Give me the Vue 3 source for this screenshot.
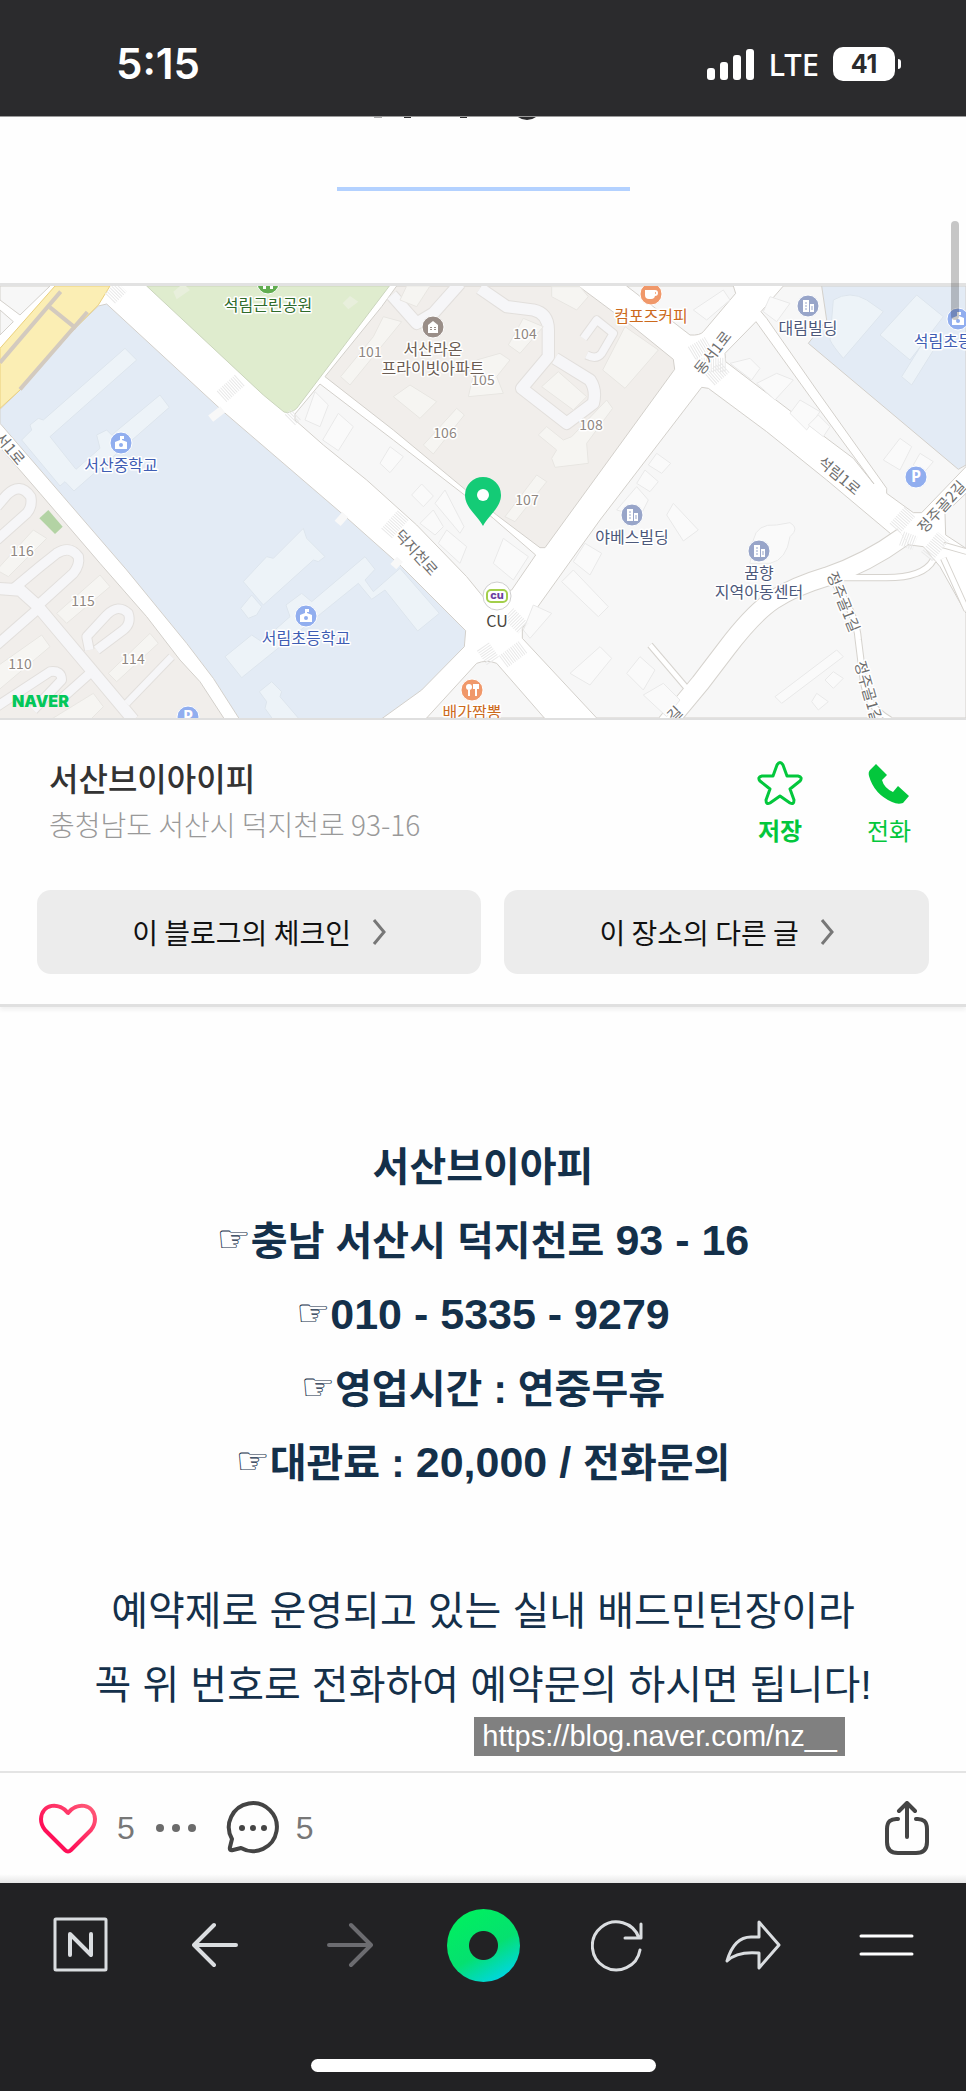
<template>
  <div class="screen">
    <header class="status">
      <time class="clock">5:15</time>
      <div class="status-right">
        <div class="signal">
          <span v-for="n in 4" :key="n" :class="'bar bar-' + n"></span>
        </div>
        <span class="network">LTE</span>
        <div class="battery">41</div>
      </div>
    </header>

    <main class="post">
      <section class="intro">
        <svg class="heading-cut" viewBox="0 0 180 5" aria-hidden="true">
          <rect x="4" y="0" width="8" height="1" fill="#aaa" />
          <rect x="34" y="0" width="7" height="1" />
          <rect x="90" y="0" width="7" height="1" />
          <path d="M148 0H166Q162 3 157 3Q152 3 148 0Z" />
        </svg>
        <hr class="divider" />
      </section>

      <section class="place">
        <svg class="map" viewBox="0 0 966 432" preserveAspectRatio="xMidYMid slice">
          <g transform="scale(0.33333) translate(0 -18)">
            <rect y="18" width="2898" height="1300" fill="#fff" />

            <g class="block">
              <path v-for="d in blocks" :key="d" :d="d" />
            </g>
            <g class="block estate">
              <path v-for="d in estates" :key="d" :d="d" />
            </g>
            <g class="block school">
              <path v-for="d in schools" :key="d" :d="d" />
            </g>
            <path class="park" d="M440 18H1168L890 385Q872 402 852 396L790 345Z" />
            <path class="lawn" d="M520 35L550 10L570 30L530 58ZM1028 70L1050 48L1075 65L1045 88Z" />
            <path class="plaza" d="M165 18H330L295 75L220 150L60 330L0 385V205Z" />
            <path class="rail" d="M182 35L0 248M150 82L228 145M262 96L60 328" />

            <g class="lane-edge">
              <path v-for="lane in lanes" :key="lane.d" :d="lane.d" :stroke-width="lane.w + 6" />
            </g>
            <g class="lane">
              <path v-for="lane in lanes" :key="lane.d" :d="lane.d" :stroke-width="lane.w" />
            </g>
            <g class="road-edge">
              <path v-for="road in roads" :key="road.d" :d="road.d" :stroke-width="road.w + 6" />
            </g>
            <g class="road">
              <path v-for="road in roads" :key="road.d" :d="road.d" :stroke-width="road.w" />
              <path class="gate" d="M632 416L668 388M1013 730L1036 704M1180 860L1200 838" />
            </g>

            <path class="garden" d="M145 690L188 740L165 762L118 715Z" />
            <g class="house">
              <path v-for="d in houses" :key="d" :d="d" />
            </g>
            <g class="house flat">
              <path v-for="d in flats" :key="d" :d="d" />
            </g>
            <g class="house classroom">
              <path v-for="d in classrooms" :key="d" :d="d" />
            </g>
            <path class="crosswalk" d="M665 350L720 300M870 420L890 400M1160 760L1210 705M2075 220L2125 190M2090 255L2180 255M2130 300L2175 260M2685 745L2730 695M2705 775L2745 790M2780 830L2830 770M1525 1000L1570 1045M1510 1145L1570 1100M1449 1100L1480 1145M330 55L365 20" />
          </g>

          <g v-for="pin in pins" :key="pin.x + '-' + pin.y" :transform="'translate(' + pin.x + ' ' + pin.y + ')'">
            <circle r="11" :class="'pin ' + pin.type" />
            <g v-if="pin.type === 'edu'" class="glyph">
              <path d="M-6 -1L-1 -3V-7H3V-4H1V-3L6 -1V6H-6Z" />
              <circle cy="2" r="2" class="edu" />
            </g>
            <g v-else-if="pin.type === 'office'" class="glyph">
              <path d="M-5 -6H1V6H-5ZM2 -2H6V6H2Z" />
              <path class="office-lines" d="M-3 -3H-1M-3 0H-1M-3 3H-1M4 0V4" />
            </g>
            <g v-else-if="pin.type === 'home'" class="glyph">
              <path d="M-5 -2L0 -6L5 -2V6H-5Z" />
              <path class="home-lines" d="M-2 0V4M2 0V4" />
            </g>
            <text v-else-if="pin.type === 'parking'" class="parking-text" y="5">P</text>
            <g v-else-if="pin.type === 'cafe'" class="glyph">
              <path d="M-6 -4H4V1Q4 5 0 5H-2Q-6 5 -6 1Z" />
              <circle class="handle" cx="4" cy="-1" r="2" />
            </g>
            <g v-else-if="pin.type === 'food'" class="glyph">
              <circle cx="-3" cy="-3" r="3" />
              <path class="fork" d="M-3 0V6M4 -6V6M2 -6V-2H6V-6" />
            </g>
            <path v-else class="tree" d="M-5 0V6H-2V2H2V6H5V0Z" />
          </g>

          <g class="store" transform="translate(497 310)">
            <circle r="14" />
            <rect x="-10" y="-6" width="20" height="12" rx="4" />
            <text y="3">cu</text>
          </g>

          <text
            v-for="label in labels"
            :key="label.text + label.x + label.y"
            :class="'label ' + label.type"
            :x="label.x"
            :y="label.y"
          >{{ label.text }}</text>
          <text
            v-for="street in streets"
            :key="street.text + street.x"
            class="label street"
            y="5"
            :transform="'translate(' + street.x + ' ' + street.y + ') rotate(' + street.turn + ')'"
          >{{ street.text }}</text>

          <path class="marker" d="M483 240C478 230 465 222 465 209A18 18 0 1 1 501 209C501 222 488 230 483 240Z" />
          <circle cx="483" cy="209" r="6" fill="#fff" />
          <text class="brand" x="12" y="421">NAVER</text>
        </svg>

        <div class="place-info">
          <div>
            <h2 class="place-name">서산브이아이피</h2>
            <p class="place-address">충청남도 서산시 덕지천로 93-16</p>
          </div>
          <div class="place-actions">
            <button type="button" class="action strong">
              <svg viewBox="0 0 46 46" width="46" height="46" fill="none" stroke="currentColor" stroke-width="3" stroke-linejoin="round">
                <path d="M20 5Q23 0 26 5L30 16L41 16Q46 17 43 21L33 29L37 40Q37 45 33 43L23 36L13 43Q9 45 9 40L13 29L3 21Q0 17 5 16L16 16Z" />
              </svg>
              저장
            </button>
            <button type="button" class="action">
              <svg viewBox="0 0 46 46" width="46" height="46" fill="currentColor">
                <path d="M10 4L21 15L16 20Q18 28 27 32L32 26L43 36L37 43Q32 45 26 42Q8 34 3 16Q2 12 4 10Z" />
              </svg>
              전화
            </button>
          </div>
        </div>

        <div class="place-links">
          <a v-for="link in links" :key="link" href="#" class="place-link">
            {{ link }}
            <svg viewBox="0 0 14 26" width="14" height="26" fill="none" stroke="#777" stroke-width="3">
              <path d="M2 1L12 13L2 25" />
            </svg>
          </a>
        </div>
      </section>

      <section class="body">
        <p class="bold">서산브이아피</p>
        <p class="bold"><span class="hand">☞</span>충남 서산시 덕지천로 <span class="num">93 - 16</span></p>
        <p class="bold"><span class="hand">☞</span><span class="num">010 - 5335 - 9279</span></p>
        <p class="bold"><span class="hand">☞</span>영업시간 : 연중무휴</p>
        <p class="bold"><span class="hand">☞</span>대관료 : <span class="num">20,000 / </span>전화문의</p>
        <p>&nbsp;</p>
        <p>예약제로 운영되고 있는 실내 배드민턴장이라</p>
        <p>꼭 위 번호로 전화하여 예약문의 하시면 됩니다!</p>
        <a class="watermark" href="#">https://blog.naver.com/nz__</a>
      </section>
      <div class="scrollbar"></div>
    </main>

    <div class="reactions">
      <button type="button" class="reaction like" aria-label="공감">
        <svg viewBox="0 0 58 52" width="58" height="52" fill="none">
          <defs>
            <linearGradient id="heart" x1="0" y1="1" x2="1" y2="0">
              <stop offset="0.3" stop-color="#ff1058" />
              <stop offset="1" stop-color="#ff5c78" />
            </linearGradient>
          </defs>
          <path d="M29 11C21 0 3 1 2 17Q2 23 6 28L26 48Q29 51 32 48L52 28Q56 23 56 17C55 1 37 0 29 11Z" stroke="url(#heart)" stroke-width="4" stroke-linejoin="round" />
        </svg>
        <span>5</span>
      </button>
      <button type="button" class="reaction more" aria-label="더보기">
        <svg viewBox="0 0 40 8" width="40" height="8" fill="#6b6b6b">
          <circle cx="4" cy="4" r="4" />
          <circle cx="20" cy="4" r="4" />
          <circle cx="36" cy="4" r="4" />
        </svg>
      </button>
      <button type="button" class="reaction" aria-label="댓글">
        <svg viewBox="0 0 54 54" width="54" height="54">
          <path d="M6 38A24 24 0 1 1 15 47L7 49Q3 50 4 46Z" fill="none" stroke="#444" stroke-width="4" stroke-linejoin="round" />
          <g fill="#444">
            <circle cx="16" cy="27" r="3" />
            <circle cx="27" cy="27" r="3" />
            <circle cx="38" cy="27" r="3" />
          </g>
        </svg>
        <span>5</span>
      </button>
      <button type="button" class="reaction share" aria-label="공유">
        <svg viewBox="0 0 46 54" width="46" height="54" fill="none" stroke="#444" stroke-width="4" stroke-linecap="round" stroke-linejoin="round">
          <path d="M23 36V3M15 10L23 2L31 10M14 18Q3 17 3 28V41Q3 52 14 52H32Q43 52 43 41V28Q43 17 32 18" />
        </svg>
      </button>
    </div>

    <footer class="browser">
      <nav class="toolbar">
        <button type="button" aria-label="네이버 홈">
          <svg viewBox="0 0 56 56" width="56" height="56" fill="none" stroke="#dadde0" stroke-width="4" stroke-linecap="round" stroke-linejoin="round">
            <rect x="2" y="2" width="51" height="51" rx="1" stroke-width="3" />
            <path d="M17 38V17L38 38V17" />
          </svg>
        </button>
        <button type="button" aria-label="뒤로">
          <svg viewBox="0 0 46 46" width="46" height="46" fill="none" stroke="#dadde0" stroke-width="4" stroke-linecap="round" stroke-linejoin="round">
            <path d="M44 23H3M22 3L2 23L22 43" />
          </svg>
        </button>
        <button type="button" aria-label="앞으로" disabled>
          <svg viewBox="0 0 46 46" width="46" height="46" fill="none" stroke="#6c6c70" stroke-width="4" stroke-linecap="round" stroke-linejoin="round">
            <path d="M2 23H43M24 3L44 23L24 43" />
          </svg>
        </button>
        <button type="button" class="green-dot" aria-label="그린닷"></button>
        <button type="button" aria-label="새로고침">
          <svg viewBox="0 0 54 54" width="54" height="54" fill="none" stroke="#dadde0" stroke-width="3" stroke-linecap="round" stroke-linejoin="round">
            <path d="M49 32A24 24 0 1 1 48 20M50 6V20H34" />
          </svg>
        </button>
        <button type="button" aria-label="공유하기">
          <svg viewBox="0 0 56 50" width="56" height="50" fill="none" stroke="#dadde0" stroke-width="3" stroke-linejoin="round">
            <path d="M34 2L54 25L34 48V33Q12 31 2 41Q9 17 26 17H34Z" />
          </svg>
        </button>
        <button type="button" aria-label="메뉴">
          <svg viewBox="0 0 56 22" width="56" height="22" stroke="#fff" stroke-width="3" stroke-linecap="round">
            <path d="M2 2H53M2 20H53" />
          </svg>
        </button>
      </nav>
      <div class="home-indicator"></div>
    </footer>
  </div>
</template>

<script setup>
const links = ["이 블로그의 체크인", "이 장소의 다른 글"];

// Khối đất nền xám nhạt
const blocks = [
  "M0 18H150L60 105L0 60Z",
  "M0 90L40 125L0 165Z",
  "M960 312L885 402V420L970 495L1100 600L1250 735L1400 890L1449 950L1535 930L1607 825L1480 715L1400 650L1180 480Z",
  "M1880 18H2200L2207 40L2110 155Q2100 167 2070 165Z",
  "M2350 18L2283 95L2300 115L2450 330L2660 625L2660 640L2740 698H2765L2898 560V18Z",
  "M2268 125L2175 220L2177 245L2400 415L2560 535L2622 612L2430 350Z",
  "M2105 322L2125 325L2300 455L2480 600L2673 762L2690 790L2770 800L2820 860L2898 1000V1314H1790L1567 1075V1045L1800 720Z",
  "M2898 640L2835 700L2837 765L2898 805Z",
  "M1280 1314L1430 1150Q1460 1138 1490 1150L1633 1314Z",
];

const estates = [
  "M-10 490L120 640L300 850L440 1010L540 1140L600 1205L675 1320H-10Z",
  "M1190 18L1145 80L975 290L1180 450L1395 628L1490 705L1620 803H1635L2024 268L2020 238L1899 140L1735 18Z",
];

const schools = [
  "M320 72L295 78L220 150L60 330L0 388V430L190 650L380 870L560 1090L640 1195L720 1320H1140L1265 1230L1393 1100L1397 1052L1205 860L1025 700L670 395Z",
  "M2465 18H2898V555L2875 568L2425 190L2480 120Z",
];

const lanes = [
  { w: 34, d: "M-10 925L60 930L110 975L270 1165L400 1320" },
  { w: 28, d: "M-10 680L20 645Q60 605 92 650Q98 680 80 700L-10 780" },
  { w: 28, d: "M30 935L120 860L170 820Q210 795 235 830Q240 855 220 880L115 975" },
  { w: 26, d: "M268 1110L260 1070L320 1005Q355 970 385 1000Q395 1030 370 1050L290 1110" },
  { w: 28, d: "M110 990L-10 1095" },
  { w: 26, d: "M-10 1280L150 1175Q185 1170 185 1200L100 1290M270 1180L180 1260" },
  { w: 20, d: "M380 1270L515 1130" },
  { w: 34, d: "M1175 45L1250 130L1300 100L1380 10" },
  { w: 34, d: "M1440 25L1520 80L1600 90Q1645 100 1645 150V230L1565 325L1700 430L1780 370Q1790 330 1770 300L1665 235" },
  { w: 22, d: "M1760 225Q1790 240 1805 220L1840 160L1790 120L1750 175" },
];

const roads = [
  { w: 54, d: "M2000 1330L2100 1210L2180 1105Q2260 1000 2320 960Q2380 920 2480 890Q2600 850 2710 770" },
  { w: 16, d: "M2530 893H2650Q2770 895 2800 840" },
  { w: 16, d: "M2490 890Q2570 1000 2575 1080L2590 1200Q2600 1280 2670 1320" },
  { w: 14, d: "M1950 1095L2065 1230" },
  { w: 14, d: "M2830 835L2900 990M2830 795L2900 815" },
];

const houses = [
  "M945 335L985 375L960 440L915 420Z",
  "M1015 400L1060 440L1015 512L968 480Z",
  "M1170 500L1210 530L1170 578L1140 550Z",
  "M1265 612L1300 648L1270 680L1235 645Z",
  "M1335 630L1392 740L1380 760L1305 670Z",
  "M1300 690L1330 740L1305 765L1260 730Z",
  "M1340 750L1400 800L1380 850L1315 790Z",
  "M1510 775L1585 830L1540 900L1480 850Z",
  "M2170 30L2190 60L2120 120L2080 90Z",
  "M2310 50L2370 70L2330 125L2290 95Z",
  "M2190 250L2250 235L2280 265L2255 300Z",
  "M2330 280L2380 300L2325 360L2270 310Z",
  "M2400 360L2460 395L2420 450L2370 400Z",
  "M2455 405L2490 440L2470 470L2425 435Z",
  "M2700 475L2735 500L2700 570L2650 540Z",
  "M2760 520L2800 545L2770 580L2740 555Z",
  "M1970 520L2012 550L1985 580L1945 555Z",
  "M1935 570L1975 605L1950 635L1910 610Z",
  "M2020 670L2095 750L2050 783L2000 705Z",
  "M1910 620L1945 660L1920 710L1850 690Z",
  "M1755 790L1805 820L1770 885L1720 845Z",
  "M1720 870L1825 980L1795 1010L1685 905Z",
  "M1600 975L1655 1000L1590 1075L1570 1050Z",
  "M1800 1100L1835 1135L1770 1215L1710 1180Z",
  "M1920 1130L1965 1170L1930 1230L1880 1180Z",
  "M1990 1210L2040 1260L2000 1310L1930 1245Z",
  "M2260 780Q2270 730 2330 735L2370 728Q2400 745 2370 770Q2360 840 2310 850L2250 850Z",
  "M2510 1110L2530 1130L2345 1270L2325 1250Z",
  "M2500 1175L2530 1195L2500 1225L2475 1200Z",
  "M2450 1240L2485 1265L2455 1290L2435 1265Z",
];

const flats = [
  "M-10 870L100 750L140 775L25 890Z",
  "M170 1000L300 885L330 920L200 1030Z",
  "M325 1180L450 1060L475 1090L350 1205Z",
  "M-10 1160L125 1065L150 1100L-10 1235Z",
  "M150 1320L280 1240L310 1280L270 1320Z",
  "M1150 110L1205 125L1050 315L1022 290L1120 170Z",
  "M1230 315L1310 365L1260 415L1180 350Z",
  "M1370 385L1393 405L1300 522L1270 495Z",
  "M1430 240L1500 220L1530 240L1490 290L1510 340L1405 350Z",
  "M1570 115L1630 140L1560 220L1525 195Z",
  "M1610 585L1640 605L1545 725L1515 710Z",
  "M1675 275L1760 350L1720 390L1625 320Z",
  "M1820 360L1838 385L1760 490L1765 550L1665 562L1655 535L1670 510L1615 465L1640 440L1690 480L1715 470Z",
  "M1875 140L1975 210L1875 325L1808 270Z",
  "M1655 20H1740L1765 50L1730 90L1655 50Z",
  "M1220 18H1290L1250 80L1200 60Z",
];

const classrooms = [
  "M375 205L410 240L150 470L228 568L300 505L290 465L320 450L335 465L480 345L508 382L222 633L195 605L180 618L65 480L95 450L90 435L115 415L130 420Z",
  "M910 745L920 775L975 830L955 845L940 840L790 975L730 905L800 830L820 835Z",
  "M755 945L785 980L770 1005L745 1015L722 985Z",
  "M1095 830L1125 868L1095 900L1120 935L1200 865L1318 1000L1253 1053L1155 930L1115 958L1075 910L725 1193L675 1130L755 1065L785 1085L870 1010L858 975L905 940L935 965Z",
  "M815 1205L845 1235L840 1250L900 1320H820L795 1285L800 1265L778 1235Z",
  "M2500 60Q2550 30 2600 60L2650 95L2530 235Q2500 200 2490 180Z",
  "M2750 45L2830 110L2730 240L2640 165Z",
  "M2780 170L2810 195L2735 315L2705 290Z",
];

const pins = [
  { x: 268, y: -3, type: "green" },
  { x: 121, y: 157, type: "edu" },
  { x: 306, y: 330, type: "edu" },
  { x: 958, y: 33, type: "edu" },
  { x: 433, y: 41, type: "home" },
  { x: 651, y: 8, type: "cafe" },
  { x: 472, y: 404, type: "food" },
  { x: 808, y: 20, type: "office" },
  { x: 632, y: 229, type: "office" },
  { x: 759, y: 265, type: "office" },
  { x: 916, y: 191, type: "parking" },
  { x: 188, y: 431, type: "parking" },
];

const labels = [
  { text: "101", x: 370, y: 71, type: "unit" },
  { text: "104", x: 525, y: 53, type: "unit" },
  { text: "105", x: 483, y: 99, type: "unit" },
  { text: "106", x: 445, y: 152, type: "unit" },
  { text: "107", x: 527, y: 219, type: "unit" },
  { text: "108", x: 591, y: 144, type: "unit" },
  { text: "110", x: 20, y: 383, type: "unit" },
  { text: "114", x: 133, y: 378, type: "unit" },
  { text: "115", x: 83, y: 320, type: "unit" },
  { text: "116", x: 22, y: 270, type: "unit" },
  { text: "석림근린공원", x: 268, y: 25, type: "nature" },
  { text: "서산중학교", x: 121, y: 185, type: "academy" },
  { text: "서림초등학교", x: 306, y: 358, type: "academy" },
  { text: "석림초등학교", x: 958, y: 61, type: "academy" },
  { text: "서산라온", x: 433, y: 69, type: "living" },
  { text: "프라이빗아파트", x: 433, y: 88, type: "living" },
  { text: "컴포즈커피", x: 651, y: 36, type: "eatery" },
  { text: "배가짬뽕", x: 472, y: 432, type: "eatery" },
  { text: "대림빌딩", x: 808, y: 48, type: "building" },
  { text: "야베스빌딩", x: 632, y: 257, type: "building" },
  { text: "꿈향", x: 759, y: 293, type: "building" },
  { text: "지역아동센터", x: 759, y: 312, type: "building" },
  { text: "CU", x: 497, y: 341, type: "shop" },
];

const streets = [
  { text: "서1로", x: 10, y: 163, turn: 50 },
  { text: "덕지천로", x: 416, y: 267, turn: 48 },
  { text: "동서1로", x: 713, y: 67, turn: -52 },
  { text: "석림1로", x: 839, y: 190, turn: 40 },
  { text: "정주골2길", x: 942, y: 221, turn: -48 },
  { text: "정주골1길", x: 843, y: 316, turn: 68 },
  { text: "정주골1길", x: 868, y: 406, turn: 74 },
  { text: "길", x: 675, y: 428, turn: -45 },
];
</script>

<style>
body {
  margin: 0;
}
</style>

<style scoped>
.screen {
  display: flex;
  flex-direction: column;
  min-height: 100vh;
  background: #fefefe;
  color: #14304a;
  font-family: "Noto Sans CJK KR", sans-serif;
}
p,
h2 {
  margin: 0;
}
button {
  padding: 0;
  border: none;
  background: none;
  font-family: inherit;
}
svg {
  display: block;
}

/* status bar */
.status {
  box-sizing: border-box;
  height: 116px;
  padding: 12px 65px 0 116px;
  display: flex;
  align-items: center;
  justify-content: space-between;
  background: #2b2b2d;
  color: #fff;
}
.clock {
  font: 600 42px/48px Inter, sans-serif;
}
.status-right {
  display: flex;
  align-items: center;
}
.signal {
  display: flex;
  align-items: flex-end;
  gap: 5px;
  margin-right: 14px;
}
.bar {
  width: 8px;
  border-radius: 3px;
  background: #fff;
}
.bar-1 {
  height: 12px;
}
.bar-2 {
  height: 18px;
}
.bar-3 {
  height: 25px;
}
.bar-4 {
  height: 31px;
}
.network {
  margin-right: 14px;
  font: 500 31px/36px "Noto Sans", sans-serif;
}
.battery {
  position: relative;
  width: 62px;
  margin-right: 6px;
  border-radius: 10px;
  background: #fff;
  color: #2b2b2d;
  font: 700 25px/34px Inter, sans-serif;
  text-align: center;
}
.battery::after {
  content: "";
  position: absolute;
  right: -6px;
  top: 12px;
  width: 3px;
  height: 10px;
  border-radius: 0 4px 4px 0;
  background: #fff;
}

/* post */
.post {
  position: relative;
  flex: 1;
}
.intro {
  box-sizing: border-box;
  height: 167px;
  border-top: 1px solid #9a9a9a;
}
.heading-cut {
  width: 180px;
  height: 5px;
  margin: 0 auto;
  fill: #2b2b2d;
  padding-right: 46px;
}
.divider {
  width: 293px;
  height: 4px;
  margin: 65px auto 0;
  border: none;
  background: #b3d1ff;
}
.scrollbar {
  position: absolute;
  top: 105px;
  right: 7px;
  width: 8px;
  height: 99px;
  border-radius: 4px;
  background: rgba(0, 0, 0, 0.22);
}

/* map */
.place {
  border-top: 3px solid #e2e2e2;
  border-bottom: 3px solid #e0e0e0;
  box-shadow: 0 3px 4px #f1f1f1;
}
.map {
  width: 100%;
  height: 432px;
  border-bottom: 2px solid #dfdfdf;
}
.block {
  fill: #f7f7f7;
  stroke: #d3d0cb;
  stroke-width: 3;
}
.estate {
  fill: #f1eeeb;
}
.school {
  fill: #e3ebf5;
}
.park {
  fill: #dfecce;
  stroke: #cbd5bd;
  stroke-width: 3;
}
.lawn {
  fill: #e8efdc;
}
.plaza {
  fill: #fbeeb4;
  stroke: #ead07c;
  stroke-width: 3;
}
.rail {
  fill: none;
  stroke: #d3cabf;
  stroke-width: 12;
}
.garden {
  fill: #b3d3a4;
}
.lane,
.lane-edge,
.road,
.road-edge {
  fill: none;
  stroke-linejoin: round;
}
.lane {
  stroke: #f6f6f8;
}
.lane-edge {
  stroke: #e2dfdc;
}
.road {
  stroke: #fff;
}
.road-edge {
  stroke: #d6d3ce;
}
.gate {
  stroke: #f8f8f8;
  stroke-width: 24;
}
.house {
  fill: #fafafa;
  stroke: #e9e9e9;
  stroke-width: 3;
}
.flat {
  fill: #f6f5f2;
  stroke: #e8e6e2;
}
.classroom {
  fill: #edf3f8;
  stroke: #dde5ed;
}
.crosswalk {
  fill: none;
  stroke: #e9e9e9;
  stroke-width: 44;
  stroke-dasharray: 3 4;
}
.pin {
  stroke: #fff;
  stroke-width: 1;
}
.glyph {
  fill: #fff;
}
.green {
  fill: #62ad50;
}
.tree {
  fill: #fff;
}
.edu,
.parking {
  fill: #91aeef;
}
.home {
  fill: #9a8e88;
}
.cafe,
.food {
  fill: #f0986a;
}
.office {
  fill: #98a5c9;
}
.office-lines {
  stroke: #98a5c9;
}
.home-lines {
  stroke: #9a8e88;
  stroke-width: 2;
  stroke-dasharray: 1 1;
}
.handle,
.fork {
  fill: none;
  stroke: #fff;
  stroke-width: 2;
}
.parking-text {
  fill: #fff;
  font: 700 16px "Open Sans", sans-serif;
  text-anchor: middle;
}
.store circle {
  fill: #fff;
  stroke: #cfcfcf;
}
.store rect {
  fill: #fff;
  stroke: #a3cf4b;
  stroke-width: 2;
}
.store text {
  fill: #6b3fa0;
  font: 800 11px Inter, sans-serif;
  text-anchor: middle;
}
.label {
  font-size: 16px;
  font-weight: 400;
  text-anchor: middle;
  paint-order: stroke;
  stroke: #fff;
  stroke-width: 3px;
  stroke-linejoin: round;
}
.unit {
  fill: #8f8782;
  font-size: 14px;
}
.street {
  fill: #6e6e6e;
  font-size: 15px;
}
.nature {
  fill: #2f6b2a;
}
.academy {
  fill: #3f5db3;
}
.living {
  fill: #6b5d54;
}
.eatery {
  fill: #cc6a1c;
}
.building {
  fill: #4c587a;
}
.shop {
  fill: #4a453d;
}
.marker {
  fill: #14cb76;
}
.brand {
  fill: #03c75a;
  font: 900 16px Inter, sans-serif;
}

/* place card */
.place-info {
  display: flex;
  justify-content: space-between;
  padding: 34px 47px 42px 49px;
}
.place-name {
  color: #333;
  font-size: 32px;
  font-weight: 500;
  line-height: 47px;
}
.place-address {
  color: #999;
  font-size: 28px;
  font-weight: 300;
  line-height: 47px;
}
.place-actions {
  display: flex;
  gap: 49px;
  padding-top: 6px;
}
.action {
  width: 60px;
  display: flex;
  flex-direction: column;
  align-items: center;
  gap: 8px;
  color: #03c73c;
  font-size: 24px;
  line-height: 32px;
}
.strong {
  font-weight: 700;
}
.place-links {
  display: flex;
  gap: 23px;
  padding: 0 37px 30px;
}
.place-link {
  flex: 1 1 auto;
  display: flex;
  align-items: center;
  justify-content: center;
  gap: 21px;
  border-radius: 14px;
  background: #ececec;
  color: #111;
  font-size: 28px;
  line-height: 84px;
  text-decoration: none;
}

/* text */
.body {
  position: relative;
  padding: 123px 24px 49px;
  font-family: "Liberation Sans", "Noto Sans CJK KR", sans-serif;
  font-size: 40px;
  line-height: 74px;
  text-align: center;
}
.bold {
  font-weight: 700;
}
.num {
  font-size: 43px;
  line-height: 1;
}
.hand {
  font-family: "DejaVu Sans", sans-serif;
  font-size: 38px;
  font-weight: 400;
  line-height: 1;
  vertical-align: 3px;
}
.watermark {
  position: absolute;
  right: 121px;
  bottom: 15px;
  padding: 0 8px;
  background: #808080;
  color: #fff;
  font: 400 29px/39px "Liberation Sans", sans-serif;
  text-decoration: none;
}

/* reactions */
.reactions {
  box-sizing: border-box;
  height: 112px;
  display: flex;
  align-items: center;
  padding: 0 36px 0 39px;
  border-top: 2px solid #e4e4e4;
  background: linear-gradient(#fefefe 92%, #e6e6e6);
}
.reaction {
  display: flex;
  align-items: center;
  color: #777;
  font: 400 32px/40px "Liberation Sans", sans-serif;
}
.reaction span {
  margin-left: 16px;
}
.like span {
  margin-left: 20px;
}
.more {
  margin: 0 30px 0 21px;
}
.share {
  margin-left: auto;
}

/* browser toolbar */
.browser {
  padding-bottom: 19px;
  background: #222224;
}
.toolbar {
  height: 124px;
  display: grid;
  grid-template-columns: repeat(7, 1fr);
  align-items: center;
  justify-items: center;
  padding: 0 12px 0 14px;
}
.green-dot {
  width: 73px;
  height: 73px;
  box-sizing: border-box;
  border-radius: 50%;
  background: radial-gradient(circle, #222224 14px, transparent 15px),
    linear-gradient(150deg, #00f05f 10%, #05e070 55%, #00d5e8 90%);
}
.home-indicator {
  width: 345px;
  height: 13px;
  margin: 52px auto 0;
  border-radius: 7px;
  background: #fff;
}
</style>
